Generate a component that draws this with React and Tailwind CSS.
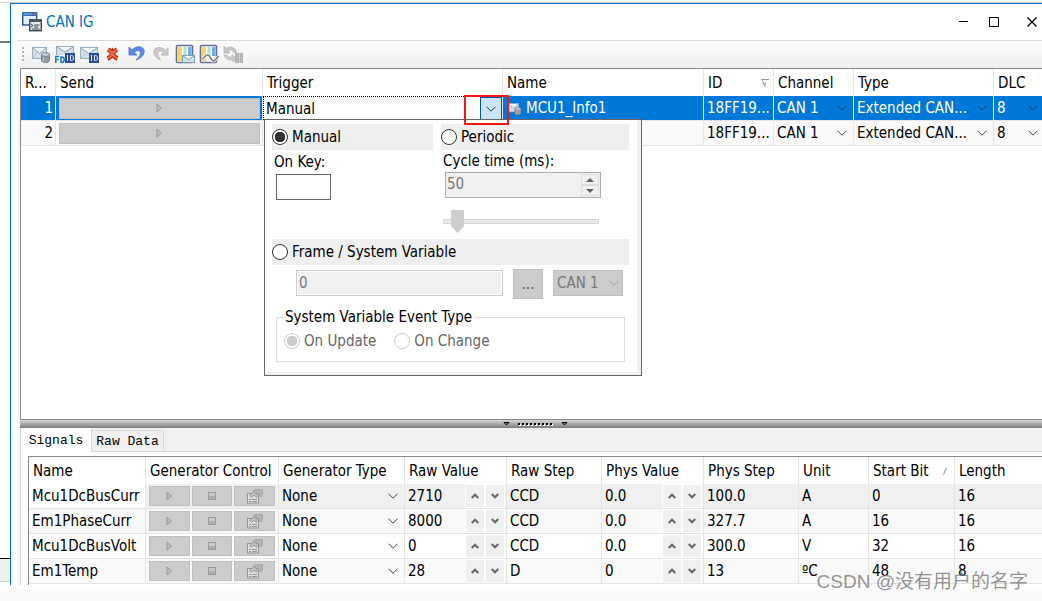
import React from "react";

const Chevron = ({ className = "" }) => (
  <svg viewBox="0 0 10 6" className={`h-[6px] w-[10px] shrink-0 ${className}`} fill="none" stroke="currentColor">
    <path d="M.5 .7 5 5.2 9.5 .7" />
  </svg>
);

const EnvelopeBase = ({ w = 15 }) => (
  <g>
    <rect x="1.5" y="3.5" width={w} height="11" fill="#d3e0e8" stroke="#9aaebc" />
    <path d={`M2 4 L${1.5 + w / 2} 9.5 L${w + 1} 4`} fill="#f2f7fa" stroke="#8ba1b0" />
    <path d={`M2 14 L${w / 2 - 1} 8.5 M${w + 1} 14 L${w / 2 + 4} 8.5`} stroke="#b4c6d2" />
  </g>
);

const DbEnvelope = ({ size = "h-5 w-5" }) => (
  <svg viewBox="0 0 20 20" className={size} fill="none">
    <EnvelopeBase w={14} />
    <path d="M10.5 10.5v6c0 1 1.8 2 4 2s4-1 4-2v-6z" fill="#959da6" stroke="#727a84" />
    <ellipse cx="14.5" cy="10.5" rx="4" ry="2" fill="#c3cad1" stroke="#7d858e" />
    <path d="M12.5 13.5v4" stroke="#bfc6cd" />
  </svg>
);

const IdBadge = () => (
  <g>
    <rect x="10" y="9" width="10" height="10" fill="#2a4c9c" />
    <path d="M12.5 11v6M15.5 11.5v5h1c1.3 0 2-1 2-2.5s-.7-2.5-2-2.5z" stroke="#e8eefa" />
  </g>
);

const FdIdIcon = () => (
  <svg viewBox="0 0 20 20" className="h-5 w-5" fill="none">
    <rect x="1.5" y="2.5" width="17" height="9" fill="#d3e0e8" stroke="#9aaebc" />
    <path d="M2 3l8 5 8-5" fill="#f2f7fa" stroke="#8ba1b0" />
    <rect x="0" y="11" width="10" height="9" fill="#f6f9fb" />
    <path d="M.8 19v-6.500h3.400M.8 15.500h2.800M6 13v5.300h1c1.500 0 2.200-1 2.200-2.600S8.500 13 7 13z" stroke="#1676d2" strokeWidth="1.500" />
    <IdBadge />
  </svg>
);

const IdIcon = () => (
  <svg viewBox="0 0 20 20" className="h-5 w-5" fill="none">
    <EnvelopeBase w={17} />
    <IdBadge />
  </svg>
);

const DeleteIcon = () => (
  <svg viewBox="0 0 20 20" className="h-5 w-5" fill="none">
    <path d="M5 5.500c2.300 1 3.500 2.500 4.500 4 1-1.500 2.500-3 4.500-4M4.500 14.500c2.500-1 4-2.500 5-5 1 2.500 2.500 4 5 5" stroke="#bd2a12" strokeWidth="4.600" />
    <path d="M5 5.500c2.300 1 3.500 2.500 4.500 4 1-1.500 2.500-3 4.500-4M4.500 14.500c2.500-1 4-2.500 5-5 1 2.500 2.500 4 5 5" stroke="#f26a42" strokeWidth="2.200" />
  </svg>
);

const UndoIcon = () => (
  <svg viewBox="0 0 20 20" className="h-5 w-5" fill="none">
    <path d="M2 3v8h8L7.600 8.400C9.500 6.300 12 6 13 7.500c1.200 2-.5 5.500-4 8.500 5-1.500 8.500-5.500 8.200-9C17 2.500 10 .8 4.800 5.800z" fill="#5b8be8" stroke="#4675d8" strokeWidth=".8" />
  </svg>
);

const RedoIcon = () => (
  <svg viewBox="0 0 20 20" className="h-5 w-5" fill="none">
    <path d="M17 4v7h-7l2.400-2.400C10.500 6.600 8 6.600 7 8c-1.200 2 .5 5 2.500 8C5.500 14.500 2.500 10.500 2.800 7.500 3 3.500 10 1.500 14.600 6.400z" fill="#cccccc" stroke="#b4b4b4" strokeWidth=".8" />
  </svg>
);

const ColumnsBase = () => (
  <g>
    <rect x="1.5" y="1.5" width="16" height="17" rx="1" fill="#fdfdfd" stroke="#666c9c" strokeWidth="1.600" />
    <rect x="3" y="3" width="4" height="14" fill="#f4d668" />
    <rect x="8.500" y="3" width="3" height="9" fill="#b7dccb" />
    <rect x="13" y="3" width="3.500" height="9" fill="#6cb0e8" />
  </g>
);

const ColumnsMailIcon = () => (
  <svg viewBox="0 0 20 20" className="h-5 w-5" fill="none">
    <ColumnsBase />
    <rect x="7.500" y="11.500" width="12" height="7" fill="#cfdfe9" stroke="#7f9fb6" />
    <path d="M8 12l5.500 3.500L19 12" fill="#f2f7fa" stroke="#7f9fb6" />
  </svg>
);

const ColumnsWaveIcon = () => (
  <svg viewBox="0 0 20 20" className="h-5 w-5" fill="none">
    <ColumnsBase />
    <path d="M3 15c2 0 3-5 6-4s3 6 5.500 6S17 13 20 12.500" stroke="#fff" strokeWidth="3" />
    <path d="M3 15c2 0 3-5 6-4s3 6 5.500 6S17 13 20 12.500" stroke="#777" strokeWidth="1.500" />
  </svg>
);

const RefreshIcon = () => (
  <svg viewBox="0 0 20 20" className="h-5 w-5" fill="none">
    <path d="M1 2v7h6L5 7c2-2 5-1 6 2l2.500-1C12 3 7 1.500 3 4.500z" fill="#c4c4c4" stroke="#b0b0b0" strokeWidth=".7" />
    <path d="M1 11c1.500 4 5 6 9 4.500V18l3-4-4-3.500v2.500c-2 .7-4 0-5-2z" fill="#cecece" stroke="#b0b0b0" strokeWidth=".7" />
    <rect x="12.500" y="9.500" width="3" height="9" fill="#bcbcbc" stroke="#b0b0b0" />
    <rect x="17" y="9.500" width="2.500" height="9" fill="#bcbcbc" stroke="#b0b0b0" />
  </svg>
);

const AppIcon = () => (
  <svg viewBox="0 0 20 20" className="h-5 w-5" fill="none">
    <rect x=".7" y="1" width="14" height="12" fill="#e3effa" stroke="#2b5288" strokeWidth="1.400" />
    <rect x="0" y="0" width="15" height="4" fill="#2f6fb5" />
    <path d="M1.500 2h8" stroke="#8ec3ef" />
    <rect x="11" y="1" width="3" height="2" fill="#e0522c" />
    <rect x="7.700" y="7.700" width="11.600" height="11" fill="#e4e8eb" stroke="#39434d" strokeWidth="1.400" />
    <rect x="7" y="7" width="13" height="3" fill="#4c5863" />
    <path d="M9 12l2 1.500L9 15M12 13h5.500M12 15h4M10 17h7.500" stroke="#39434d" />
  </svg>
);

const tools = [
  ["Add database frame", DbEnvelope],
  ["Add CAN FD frame", FdIdIcon],
  ["Add CAN frame", IdIcon],
  ["Delete", DeleteIcon],
  ["Undo", UndoIcon],
  ["Redo", RedoIcon],
  ["Frame columns", ColumnsMailIcon],
  ["Signal columns", ColumnsWaveIcon],
  ["Refresh", RefreshIcon],
];

const PlayGlyph = () => (
  <svg viewBox="0 0 7 10" className="h-[10px] w-[7px]" fill="#bdbdbd" stroke="#999">
    <path d="M1 1v8l4.500-4z" />
  </svg>
);

const StopGlyph = () => (
  <svg viewBox="0 0 8 8" className="h-2 w-2">
    <rect x=".5" y=".5" width="7" height="7" fill="#c9c9c9" stroke="#9a9a9a" />
    <rect x="1" y="4" width="6" height="3" fill="#adadad" />
  </svg>
);

const PropsGlyph = () => (
  <svg viewBox="0 0 16 15" className="h-[15px] w-4" fill="none">
    <rect x=".5" y="4.500" width="11" height="9.500" fill="#dedede" stroke="#949494" />
    <path d="M2 10.500h2M5 10.500h5M2 12.500h2M5 12.500h5" stroke="#949494" />
    <path d="M2.500 6.500 7 2.500l4 4-1.500 2L7 6 4.500 8.500z" fill="#c2c2c2" stroke="#8b8b8b" strokeWidth=".8" />
    <path d="M6 2 8.500 .5h7v4.500L14 8l-2-2.500L9.500 4z" fill="#b3b3b3" stroke="#949494" strokeWidth=".6" />
  </svg>
);

const grayButton = "flex items-center justify-center border border-[#bfbfbf] bg-[#ccc]";

function CellSelect({ label, value, light, chevron = "right-2" }) {
  return (
    <div className="relative flex h-6 items-center">
      <select aria-label={label} defaultValue={value} className={`h-6 w-full appearance-none bg-transparent pl-[3px] outline-none ${light ? "text-white" : "text-black"}`}>
        <option>{value}</option>
      </select>
      <Chevron className={`pointer-events-none absolute ${chevron} ${light ? "text-[#173f63]" : "text-[#444]"}`} />
    </div>
  );
}

const radio =
  "m-0 h-4 w-4 shrink-0 appearance-none rounded-full border border-[#333] bg-white checked:bg-[radial-gradient(circle,#333_0_5px,#fff_5.5px)] disabled:border-[#ccc] disabled:checked:bg-[radial-gradient(circle,#ccc_0_5px,#fff_5.5px)]";

function Radio({ label, name, className = "", ...rest }) {
  return (
    <label className={`flex items-center gap-1 ${className}`}>
      <input type="radio" name={name} className={radio} {...rest} />
      {label}
    </label>
  );
}

function TriggerPopup() {
  return (
    <div className="absolute top-[22px] left-0 z-10 w-[378px] border border-[#666] bg-white text-black">
      <div className="border-r-4 border-b-[3px] border-[#f0f0f0] pt-1 pr-2 pb-[10px] pl-[7px]">
        <div className="grid grid-cols-[161px_1fr] gap-2">
          <div>
            <Radio name="trigger" label="Manual" defaultChecked className="h-[26px] bg-[#efefef]" />
            <label htmlFor="onkey" className="flex h-6 items-center pl-[2px]">On Key:</label>
            <input id="onkey" className="ml-1 block h-[26px] w-[55px] border border-[#666] bg-white px-1 outline-none" />
          </div>
          <div>
            <Radio name="trigger" label="Periodic" className="h-[26px] bg-[#efefef]" />
            <label htmlFor="cycle" className="flex h-[22px] items-center pl-[2px]">Cycle time (ms):</label>
            <div className="ml-1 flex h-[26px] w-[156px] border border-[#abadb3] bg-[#f0f0f0] p-px">
              <input id="cycle" disabled defaultValue="50" className="min-w-0 flex-1 bg-transparent pb-[2px] text-[#777]" />
              <div className="flex w-[18px] flex-col">
                <button disabled aria-label="Increase" className="flex flex-1 items-center justify-center border border-[#dcdcdc]">
                  <svg viewBox="0 0 8 4" className="h-1 w-2" fill="#606060"><path d="M0 4 4 0l4 4z" /></svg>
                </button>
                <button disabled aria-label="Decrease" className="flex flex-1 items-center justify-center border border-[#dcdcdc]">
                  <svg viewBox="0 0 8 4" className="h-1 w-2" fill="#606060"><path d="M0 0h8L4 4z" /></svg>
                </button>
              </div>
            </div>
            <input
              type="range"
              aria-label="Cycle time"
              disabled
              min="0"
              max="100"
              defaultValue="5"
              className="mt-3 ml-[2px] block h-[23px] w-[156px] appearance-none bg-transparent [&::-webkit-slider-runnable-track]:h-[5px] [&::-webkit-slider-runnable-track]:border [&::-webkit-slider-runnable-track]:border-[#d6d6d6] [&::-webkit-slider-runnable-track]:bg-[#e7eaea] [&::-webkit-slider-thumb]:mt-[-10px] [&::-webkit-slider-thumb]:h-[23px] [&::-webkit-slider-thumb]:w-[13px] [&::-webkit-slider-thumb]:appearance-none [&::-webkit-slider-thumb]:bg-[#ccc] [&::-webkit-slider-thumb]:[clip-path:polygon(0_0,100%_0,100%_70%,50%_100%,0_70%)]"
            />
          </div>
        </div>
        <Radio name="trigger" label="Frame / System Variable" className="mt-[6px] h-[26px] bg-[#efefef]" />
        <div className="mt-1 flex gap-[10px] pl-6 text-[#777]">
          <input aria-label="Frame" disabled defaultValue="0" className="mt-px h-[26px] w-[207px] border border-[#ccc] bg-[#f0f0f0] px-[2px] shadow-[inset_0_0_0_1px_#fff]" />
          <button disabled aria-label="Browse" className={`${grayButton} h-[30px] w-[30px] text-[#555]`}>...</button>
          <div className="relative mt-px h-[26px] w-[70px]">
            <select aria-label="Channel" disabled defaultValue="CAN 1" className="h-full w-full appearance-none border border-[#bfbfbf] bg-[#ccc] pl-[3px] text-[#777] opacity-100">
              <option>CAN 1</option>
            </select>
            <Chevron className="pointer-events-none absolute top-[10px] right-1 text-[#a0a0a0]" />
          </div>
        </div>
        <fieldset className="mx-1 mt-2 border border-[#dcdcdc] pb-[10px] pl-[6px]">
          <legend className="px-[2px]">System Variable Event Type</legend>
          <div className="flex gap-[18px] pt-1 pl-px text-[#666]">
            <Radio name="event" label="On Update" disabled defaultChecked />
            <Radio name="event" label="On Change" disabled />
          </div>
        </fieldset>
      </div>
    </div>
  );
}

const head = "h-[27px] border-r border-[#e5e5e5] p-0 pl-1 text-left font-normal whitespace-nowrap last:border-r-0";
const cell = "h-[25px] border-r border-b border-[#e5e5e5] p-0 whitespace-nowrap last:border-r-0";

function FrameTable() {
  return (
    <table className="w-full table-fixed border-separate border-spacing-0">
      <colgroup>
        <col className="w-[35px]" />
        <col className="w-[207px]" />
        <col className="w-[240px]" />
        <col className="w-[201px]" />
        <col className="w-[70px]" />
        <col className="w-[80px]" />
        <col className="w-[140px]" />
        <col />
      </colgroup>
      <thead>
        <tr>
          <th className={head}>R...</th>
          <th className={head}>Send</th>
          <th className={head}>Trigger</th>
          <th className={head}>Name</th>
          <th className={head}>
            <div className="flex items-center justify-between pr-1">
              ID
              <svg viewBox="0 0 8 8" className="h-2 w-2" fill="none" stroke="#999"><path d="M0 .5h8M1 1l3 6.500V3" /></svg>
            </div>
          </th>
          <th className={head}>Channel</th>
          <th className={head}>Type</th>
          <th className={head}>DLC</th>
        </tr>
      </thead>
      <tbody>
        {[1, 2].map((n) => {
          const on = n === 1;
          return (
            <tr key={n} className={on ? "bg-[#0078d7] text-white" : "bg-[#f9f9f9]"}>
              <td className={`${cell} pr-[2px] text-right`}>{n}</td>
              <td className={cell}>
                <div className="pr-[2px] pl-[3px]">
                  <button aria-label="Send" className={`${grayButton} h-[21px] w-full`}><PlayGlyph /></button>
                </div>
              </td>
              <td className={cell}>
                {on && (
                  <div className="relative flex h-6 border-t border-l border-dotted border-black bg-white text-black">
                    <input aria-label="Trigger" defaultValue="Manual" className="min-w-0 flex-1 bg-transparent pl-[2px] outline-none" />
                    <button aria-label="Open trigger options" className="flex w-[22px] items-center justify-center border border-[#005499] bg-[#cce4f7] text-[#333]">
                      <Chevron />
                    </button>
                    <TriggerPopup />
                    <div className="pointer-events-none absolute top-[-2px] right-[-7px] z-20 h-[30px] w-[45px] border-2 border-[#f01818]" />
                  </div>
                )}
              </td>
              <td className={cell}>
                {on && (
                  <div className="flex items-center gap-1 pl-1">
                    <DbEnvelope size="h-[15px] w-[15px]" />
                    MCU1_Info1
                  </div>
                )}
              </td>
              <td className={`${cell} pl-[3px]`}>18FF19...</td>
              <td className={cell}><CellSelect label="Channel" value="CAN 1" light={on} chevron="right-[6px]" /></td>
              <td className={cell}><CellSelect label="Type" value="Extended CAN..." light={on} chevron="right-[6px]" /></td>
              <td className={cell}><CellSelect label="DLC" value="8" light={on} chevron="right-1" /></td>
            </tr>
          );
        })}
      </tbody>
    </table>
  );
}

const signals = [
  ["Mcu1DcBusCurr", "2710", "CCD", "0.0", "100.0", "A", "0", "16"],
  ["Em1PhaseCurr", "8000", "CCD", "0.0", "327.7", "A", "16", "16"],
  ["Mcu1DcBusVolt", "0", "CCD", "0.0", "300.0", "V", "32", "16"],
  ["Em1Temp", "28", "D", "0", "13", "ºC", "48", "8"],
];

const spin = "flex h-6 w-5 items-center justify-center border border-white bg-[#f0f0f0]";

function SpinCell({ label, value }) {
  return (
    <div className="flex h-6 items-center pr-px">
      <input aria-label={label} defaultValue={value} className="min-w-0 flex-1 bg-transparent pl-[3px] outline-none" />
      <button aria-label={`Increase ${label}`} className={spin}>
        <svg viewBox="0 0 8 6" className="h-[6px] w-2" fill="none" stroke="#666" strokeWidth="2"><path d="M.7 5 4 1.700 7.300 5" /></svg>
      </button>
      <button aria-label={`Decrease ${label}`} className={spin}>
        <svg viewBox="0 0 8 6" className="h-[6px] w-2" fill="none" stroke="#666" strokeWidth="2"><path d="M.7 1 4 4.300 7.300 1" /></svg>
      </button>
    </div>
  );
}

function SignalTable() {
  return (
    <table className="w-full table-fixed border-separate border-spacing-0">
      <colgroup>
        <col className="w-[117px]" />
        <col className="w-[133px]" />
        <col className="w-[126px]" />
        <col className="w-[102px]" />
        <col className="w-[95px]" />
        <col className="w-[102px]" />
        <col className="w-[95px]" />
        <col className="w-[70px]" />
        <col className="w-[86px]" />
        <col />
      </colgroup>
      <thead>
        <tr>
          {["Name", "Generator Control", "Generator Type", "Raw Value", "Raw Step", "Phys Value", "Phys Step", "Unit"].map((h) => (
            <th key={h} className={head}>{h}</th>
          ))}
          <th className={head}>
            <div className="flex items-center justify-between pr-[7px]">
              Start Bit
              <svg viewBox="0 0 4 8" className="h-2 w-1" fill="none" stroke="#888"><path d="M.5 7.500 3.500 .5" /></svg>
            </div>
          </th>
          <th className={head}>Length</th>
        </tr>
      </thead>
      <tbody>
        {signals.map(([name, raw, rawStep, phys, physStep, unit, start, len], i) => (
          <tr key={name} className={i === 0 ? "bg-[#f0f0f0]" : i % 2 ? "bg-[#f9f9f9]" : "bg-white"}>
            <td className={`${cell} pl-[3px] ${i === 0 ? "bg-white" : ""}`}>{name}</td>
            <td className={cell}>
              <div className="flex gap-[2px] px-[3px]">
                <button aria-label="Start" className={`${grayButton} h-5 flex-1`}><PlayGlyph /></button>
                <button aria-label="Stop" className={`${grayButton} h-5 flex-1`}><StopGlyph /></button>
                <button aria-label="Properties" className={`${grayButton} h-5 flex-1`}><PropsGlyph /></button>
              </div>
            </td>
            <td className={cell}><CellSelect label="Generator Type" value="None" chevron="right-[6px]" /></td>
            <td className={cell}><SpinCell label="Raw Value" value={raw} /></td>
            <td className={`${cell} pl-[3px]`}>{rawStep}</td>
            <td className={cell}><SpinCell label="Phys Value" value={phys} /></td>
            <td className={`${cell} pl-[3px]`}>{physStep}</td>
            <td className={`${cell} pl-[3px]`}>{unit}</td>
            <td className={`${cell} pl-[3px]`}>{start}</td>
            <td className={`${cell} pl-[3px]`}>{len}</td>
          </tr>
        ))}
      </tbody>
    </table>
  );
}

export default function App() {
  return (
    <div className="relative flex min-h-screen flex-col overflow-hidden bg-white font-['DejaVu_Sans_Condensed','Tahoma','DejaVu_Sans',sans-serif] text-[15px] leading-5 text-black">
      <div className="h-[3px] border-b border-[#d0d0d0]" />
      <div className="flex flex-1">
        <div className="flex w-[10px] flex-col">
          <div className="h-10 border-b-2 border-[#777]" />
          <div className="flex-1" />
          <div className="h-6 border-t border-b border-t-black border-b-[#ccc] bg-[#eee]" />
          <div className="h-[3px]" />
        </div>

        <main className="flex min-w-0 flex-1 flex-col border-t border-l border-[#0072c6]">
          <header className="flex h-9 items-center gap-1 pl-[11px] text-[#0072c6]">
            <AppIcon />
            <h1 className="flex-1">CAN IG</h1>
            <div className="flex gap-5 pr-[5px] text-black">
              <button aria-label="Minimize"><svg viewBox="0 0 10 10" className="h-[10px] w-[10px]" stroke="currentColor"><path d="M0 4.500h9" /></svg></button>
              <button aria-label="Maximize"><svg viewBox="0 0 10 10" className="h-[10px] w-[10px]" fill="none" stroke="currentColor"><path d="M.5 .5h9v9h-9z" /></svg></button>
              <button aria-label="Close" className="ml-2"><svg viewBox="0 0 10 10" className="h-[10px] w-[10px]" stroke="currentColor" strokeWidth="1.300"><path d="M.5 .5l9 9M9.500 .5l-9 9" /></svg></button>
            </div>
          </header>

          <div className="ml-[6px] flex flex-1 flex-col border-t border-[#d8d8d8] bg-[#f7f7f7] pl-[3px]">
            <div role="toolbar" className="flex h-[27px] items-center bg-linear-to-b from-[#fcfcfc] to-[#f0f0f0] pb-[2px] pl-[2px]">
              <div className="mr-1 flex w-[3px] flex-col gap-[2px]">
                <i className="h-[2px] w-[2px] bg-[#b5b5b5]" />
                <i className="h-[2px] w-[2px] bg-[#b5b5b5]" />
                <i className="h-[2px] w-[2px] bg-[#b5b5b5]" />
                <i className="h-[2px] w-[2px] bg-[#b5b5b5]" />
              </div>
              {tools.map(([label, Icon]) => (
                <button key={label} aria-label={label} className="flex h-6 w-6 items-center justify-center"><Icon /></button>
              ))}
            </div>

            <section className="flex-1 border-t border-b border-l border-[#828790] bg-white">
              <FrameTable />
            </section>

            <div className="flex h-2 items-center justify-center bg-linear-to-b from-[#d8d8d8] to-[#7c7c7c] pl-[10px]">
              <svg viewBox="0 0 66 6" className="h-[6px] w-[66px]">
                <path d="M1 1.500h5L3.500 4z M59 1.500h5L61.500 4z" fill="#777" stroke="#000" />
                <path d="M16 4h35" stroke="#fff" strokeWidth="2" strokeDasharray="2 2" />
                <path d="M15 3h35" stroke="#000" strokeWidth="2" strokeDasharray="2 2" />
              </svg>
            </div>

            <section className="border-l border-[#d5d5d5] bg-white">
              <div role="tablist" className="flex h-6 items-end bg-[#f0f0f0] font-['Liberation_Mono',monospace] text-[13px] shadow-[inset_0_-1px_#d9d9d9]">
                <button role="tab" aria-selected="true" className="h-6 w-[71px] border-r border-[#d9d9d9] bg-white pt-px">Signals</button>
                <button role="tab" aria-selected="false" className="h-[22px] w-[72px] border-t border-r border-b border-[#d9d9d9] bg-[#f0f0f0] pt-px">Raw Data</button>
              </div>
              <div className="pt-1 pl-[7px]">
                <div className="border-t border-l border-[#828790] pb-px">
                  <SignalTable />
                </div>
              </div>
            </section>
          </div>
        </main>
      </div>
      <footer className="mt-1 h-3 bg-[#fafafa]" />
      <div className="pointer-events-none absolute right-[14px] bottom-[7px] font-['Liberation_Sans','Noto_Sans_CJK_SC',sans-serif] text-[19px] leading-6 text-[#777]/80">
        CSDN @没有用户的名字
      </div>
    </div>
  );
}
